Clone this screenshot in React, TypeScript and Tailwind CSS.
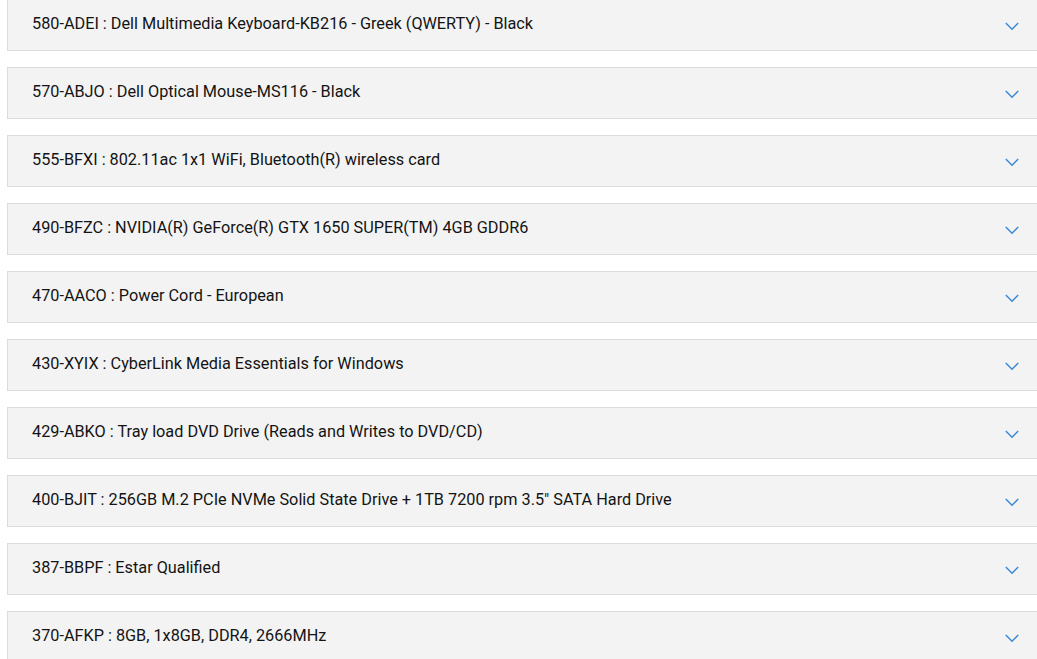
import React from "react";

const items = [
  "580-ADEI : Dell Multimedia Keyboard-KB216 - Greek (QWERTY) - Black",
  "570-ABJO : Dell Optical Mouse-MS116 - Black",
  "555-BFXI : 802.11ac 1x1 WiFi, Bluetooth(R) wireless card",
  "490-BFZC : NVIDIA(R) GeForce(R) GTX 1650 SUPER(TM) 4GB GDDR6",
  "470-AACO : Power Cord - European",
  "430-XYIX : CyberLink Media Essentials for Windows",
  "429-ABKO : Tray load DVD Drive (Reads and Writes to DVD/CD)",
  "400-BJIT : 256GB M.2 PCIe NVMe Solid State Drive + 1TB 7200 rpm 3.5\" SATA Hard Drive",
  "387-BBPF : Estar Qualified",
  "370-AFKP : 8GB, 1x8GB, DDR4, 2666MHz",
];

export default function App() {
  return (
    <div
      className="w-[1037px] h-[659px] overflow-hidden bg-white"
      style={{ fontFamily: "Roboto, 'Liberation Sans', sans-serif" }}
    >
      <div className="flex flex-col gap-4 mt-[-1px] ml-[7px] w-[1040px]">
        {items.map((t) => (
          <div
            key={t}
            className="h-[52px] shrink-0 border border-[#dcdcdc] bg-[#f3f3f3] flex items-start justify-between pl-[24px] pr-[27px]"
          >
            <span className="text-[16.25px] leading-[24px] text-[#141414] mt-[12px]">{t}</span>
            <svg
              width="14"
              height="9"
              viewBox="0 0 14 9"
              className="mt-[22px]"
              fill="none"
            >
              <polyline
                points="0.8,1 7,7.3 13.2,1"
                stroke="#3c8ad8"
                strokeWidth="1.5"
              />
            </svg>
          </div>
        ))}
      </div>
    </div>
  );
}
